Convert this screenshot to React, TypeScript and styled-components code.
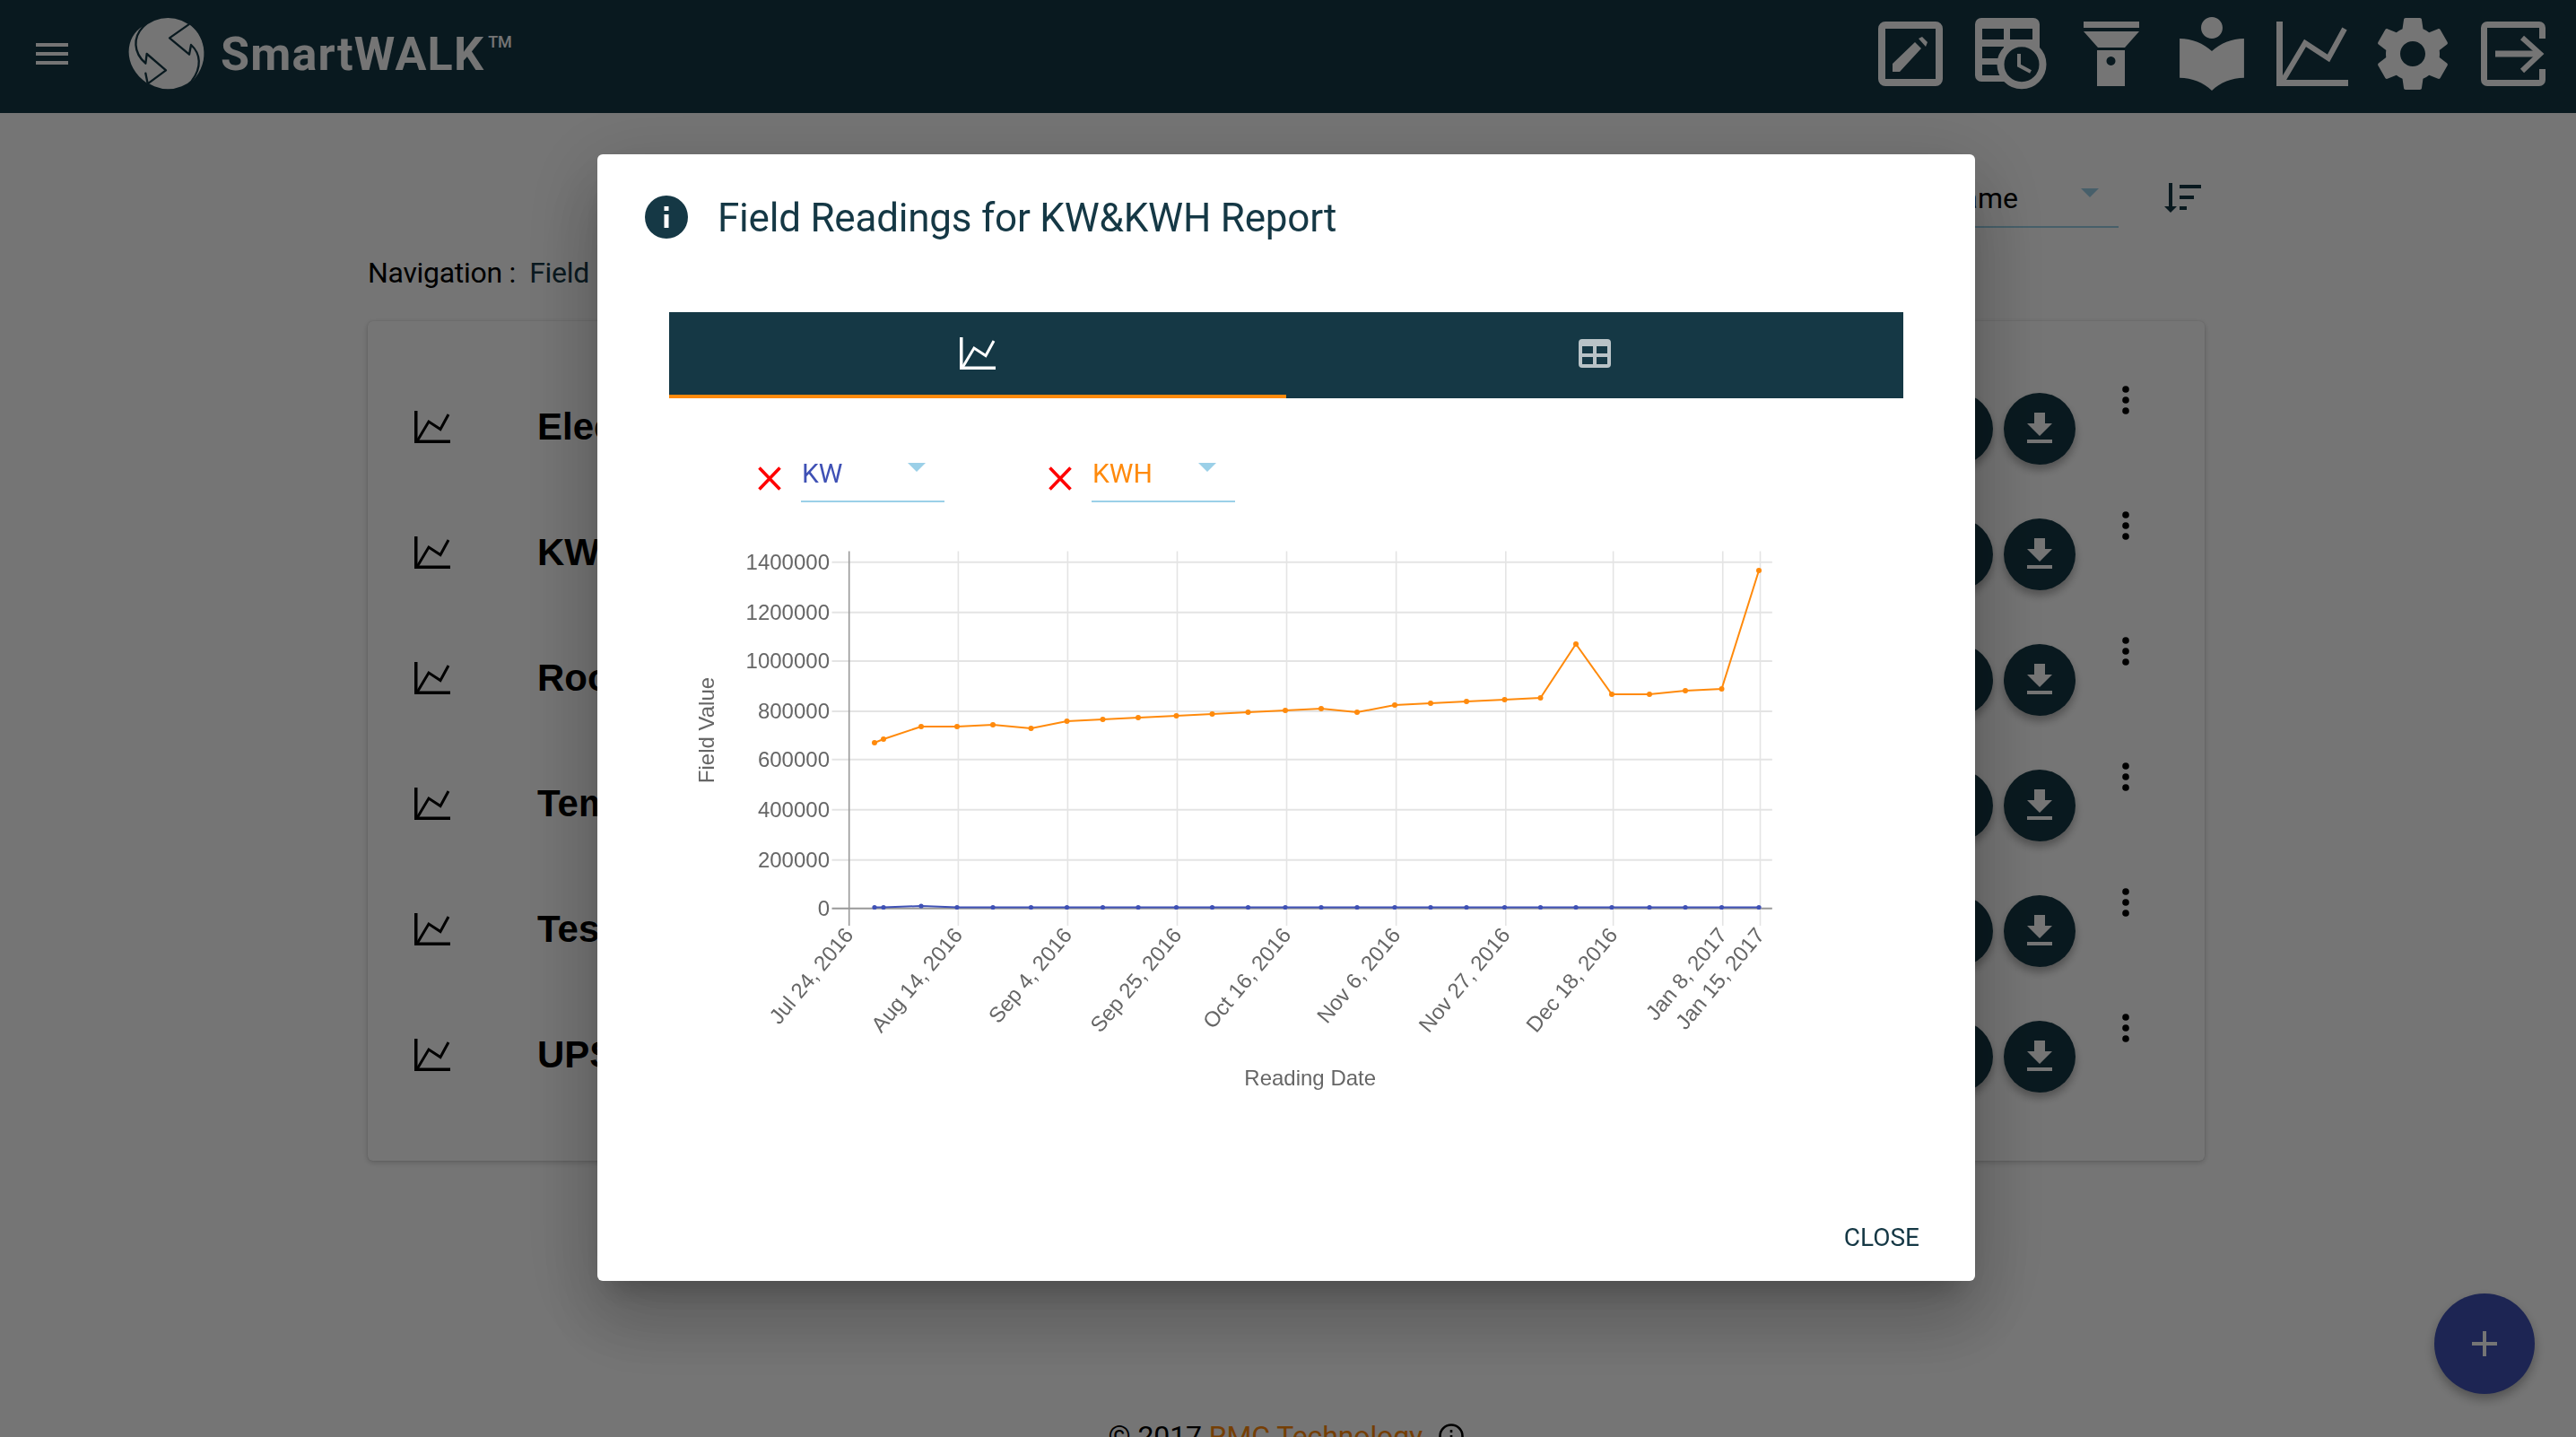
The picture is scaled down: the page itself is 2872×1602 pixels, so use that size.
import React from 'react';
import styled, { createGlobalStyle } from 'styled-components';

const TEAL = '#153845';
const ORANGE = '#ff8a0c';
const INDIGO = '#3f51b5';
const SKY = '#9bd0e8';

const GlobalStyle = createGlobalStyle`
  html, body {
    margin: 0;
    height: 100%;
    overflow: hidden;
    background: #fff;
    font-family: Roboto, "Liberation Sans", sans-serif;
  }
`;

const reports = ['Electric Meter', 'KW&KWH Report', 'Room Readings', 'Temperature', 'Test Report', 'UPS Readings'];

// sampled off the chart, in the chart's own pixel space
const xs = [975, 985, 1027, 1067, 1107, 1149.5, 1189.5, 1229.5, 1269, 1311.5, 1351.5, 1391.5, 1433, 1473, 1513, 1555, 1595, 1635, 1677.5, 1717.5, 1757, 1797, 1839, 1879, 1919.5, 1961];
const kwh = [828, 824, 810, 810, 808, 812, 804, 802, 800, 798, 796, 794, 792, 790, 794, 786, 784, 782, 780, 778, 718, 774, 774, 770, 768, 636];
const kw = xs.map((_, i) => (i === 2 ? 1010 : 1011.5));

const yTicks = [
  { label: '1400000', y: 626.7 },
  { label: '1200000', y: 682.7 },
  { label: '1000000', y: 737 },
  { label: '800000', y: 793 },
  { label: '600000', y: 846.8 },
  { label: '400000', y: 902.8 },
  { label: '200000', y: 958.8 },
  { label: '0', y: 1012.7 },
];

const xTicks = [
  { label: 'Jul 24, 2016', x: 946.7 },
  { label: 'Aug 14, 2016', x: 1068.4 },
  { label: 'Sep 4, 2016', x: 1190.4 },
  { label: 'Sep 25, 2016', x: 1312.5 },
  { label: 'Oct 16, 2016', x: 1434.5 },
  { label: 'Nov 6, 2016', x: 1556.6 },
  { label: 'Nov 27, 2016', x: 1678.8 },
  { label: 'Dec 18, 2016', x: 1798.6 },
  { label: 'Jan 8, 2017', x: 1920.7 },
  { label: 'Jan 15, 2017', x: 1962.5 },
];

const ChartLineIcon = () => (
  <svg viewBox="0 0 80 72" width="100%" height="100%" fill="none" stroke="currentColor">
    <path d="M3.5 0V68.5H80" strokeWidth="7" />
    <path d="M7 66L32 24L58 41L76 8" strokeWidth="6" />
  </svg>
);

const Logo = () => (
  <LogoMark viewBox="0 0 360 300">
    <circle cx="172" cy="149" r="119" fill="#fff" />
    <path d="M240 50C290 80 322 170 252 243C290 190 282 150 249 120Z" fill="#fff" />
    <path d="M88 58C30 90 15 190 104 250L97 182C62 150 60 100 88 58Z" fill="#fff" />
    <g fill="none" stroke={TEAL} strokeWidth="7" strokeLinejoin="round" strokeLinecap="round">
      <path d="M241 52L177 97L243 152L249 120C282 150 285 195 252 240" />
      <path d="M88 60C55 95 55 145 97 182L101 150L165 205L104 250L97 215" />
    </g>
  </LogoMark>
);

const App: React.FC = () => {
  return (
    <>
      <GlobalStyle />
      <Toolbar>
        <MenuButton>
          <i />
          <i />
          <i />
        </MenuButton>
        <LogoGroup>
          <Logo />
          <LogoText>
            SmartWALK<sup>TM</sup>
          </LogoText>
        </LogoGroup>
        <ToolbarIcons>
          <ToolbarIcon>
            <svg width="72" height="72" viewBox="0 0 72 72" fill="currentColor">
              <rect x="4" y="4" width="64" height="64" rx="4" fill="none" stroke="currentColor" strokeWidth="8" />
              <path d="M16 56V47L41 23L48 30L24 56ZM45 19L49 17L55 23L53 28Z" />
            </svg>
          </ToolbarIcon>
          <ToolbarIcon>
            <svg width="80" height="80" viewBox="0 0 80 80">
              <path
                fillRule="evenodd"
                fill="currentColor"
                d="M7 0H65a7 7 0 0 1 7 7V64a7 7 0 0 1-7 7H7a7 7 0 0 1-7-7V7a7 7 0 0 1 7-7ZM8 12V24H32V12ZM39 12V24H64V12ZM8 32V45H32V32ZM8 52V64H32V52Z"
              />
              <circle cx="52" cy="51.7" r="23.5" fill={TEAL} stroke="currentColor" strokeWidth="8" />
              <path d="M49 40V53L62 60" fill="none" stroke="currentColor" strokeWidth="4" />
            </svg>
          </ToolbarIcon>
          <ToolbarIcon>
            <svg width="62" height="72" viewBox="0 0 62 72" fill="currentColor">
              <path
                fillRule="evenodd"
                d="M0 0H62V7H0ZM0 11H62L46 29H16ZM15 32H46V72H15ZM30.5 39a5 5 0 1 0 .01 0Z"
              />
            </svg>
          </ToolbarIcon>
          <ToolbarIcon>
            <svg width="72" height="82" viewBox="3 2 18 20.55" fill="currentColor">
              <path d="M12 11.55C9.64 9.35 6.48 8 3 8v11c3.48 0 6.64 1.35 9 3.55 2.36-2.19 5.52-3.55 9-3.55V8c-3.48 0-6.64 1.35-9 3.55zM12 8c1.66 0 3-1.34 3-3s-1.34-3-3-3-3 1.34-3 3 1.34 3 3 3z" />
            </svg>
          </ToolbarIcon>
          <ToolbarIcon>
            <ChartBox $width={80} $height={72}>
              <ChartLineIcon />
            </ChartBox>
          </ToolbarIcon>
          <ToolbarIcon>
            <svg width="80" height="80" viewBox="2 2 20 20" fill="currentColor">
              <path d="M19.43 12.98c.04-.32.07-.64.07-.98s-.03-.66-.07-.98l2.11-1.65c.19-.15.24-.42.12-.64l-2-3.46c-.12-.22-.39-.3-.61-.22l-2.49 1c-.52-.4-1.08-.73-1.69-.98l-.38-2.65C14.46 2.18 14.25 2 14 2h-4c-.25 0-.46.18-.49.42l-.38 2.65c-.61.25-1.17.59-1.69.98l-2.49-1c-.23-.09-.49 0-.61.22l-2 3.46c-.13.22-.07.49.12.64l2.11 1.65c-.04.32-.07.65-.07.98s.03.66.07.98l-2.11 1.65c-.19.15-.24.42-.12.64l2 3.46c.12.22.39.3.61.22l2.49-1c.52.4 1.08.73 1.69.98l.38 2.65c.03.24.24.42.49.42h4c.25 0 .46-.18.49-.42l.38-2.65c.61-.25 1.17-.59 1.69-.98l2.49 1c.23.09.49 0 .61-.22l2-3.46c.12-.22.07-.49-.12-.64l-2.11-1.65zM12 15.5c-1.93 0-3.5-1.57-3.5-3.5s1.57-3.5 3.5-3.5 3.5 1.57 3.5 3.5-1.57 3.5-3.5 3.5z" />
            </svg>
          </ToolbarIcon>
          <ToolbarIcon>
            <svg width="72" height="72" viewBox="0 0 72 72" fill="none" stroke="currentColor" strokeWidth="7">
              <path d="M68.5 19V7a3.5 3.5 0 0 0-3.5-3.5H7A3.5 3.5 0 0 0 3.5 7V65A3.5 3.5 0 0 0 7 68.5H65a3.5 3.5 0 0 0 3.5-3.5V53" />
              <path d="M16 36H66" />
              <path d="M46 18L66 36L46 55" strokeWidth="6" />
            </svg>
          </ToolbarIcon>
        </ToolbarIcons>
      </Toolbar>

      <Main>
        <Controls>
          <SortSelect>
            Field Name
            <SortCaret />
          </SortSelect>
          <SortIcon viewBox="0 0 41 33" fill={TEAL}>
            <path d="M5 0H9V26H14L7 33L0 26H5ZM17 2H41V6H17ZM17 14H33V18H17ZM17 26H25V30H17Z" />
          </SortIcon>
        </Controls>
        <Breadcrumb>
          Navigation :&nbsp; <BreadcrumbLink>Field Readings</BreadcrumbLink>
        </Breadcrumb>
        <Card>
          {reports.map((name) => (
            <ReportRow key={name}>
              <ChartBox $width={40} $height={36} $color="#000">
                <ChartLineIcon />
              </ChartBox>
              <ReportName>{name}</ReportName>
              <RoundButton />
              <RoundButton>
                <svg width="48" height="48" viewBox="0 0 24 24" fill="#fff">
                  <path d="M19 9h-4V3H9v6H5l7 7 7-7zM5 18v2h14v-2H5z" />
                </svg>
              </RoundButton>
              <MoreDots width="8" height="32" viewBox="0 0 8 32" fill="#000">
                <circle cx="4" cy="4" r="3.8" />
                <circle cx="4" cy="16" r="3.8" />
                <circle cx="4" cy="28" r="3.8" />
              </MoreDots>
            </ReportRow>
          ))}
        </Card>
        <Footer>
          © 2017 <FooterLink>RMC Technology</FooterLink>.
          <FooterInfo width="28" height="28" viewBox="0 0 28 28" fill="none" stroke="#000" strokeWidth="2.6">
            <circle cx="14" cy="14" r="12.5" />
            <path d="M14 7V10M14 13V21" />
          </FooterInfo>
        </Footer>
      </Main>

      <Fab>
        <svg width="28" height="28" viewBox="0 0 28 28" fill="#fff">
          <path d="M12 0H16V12H28V16H16V28H12V16H0V12H12Z" />
        </svg>
      </Fab>

      <Overlay>
        <Dialog>
          <DialogTitle>
            <svg width="48" height="48" viewBox="0 0 48 48">
              <circle cx="24" cy="24" r="24" fill={TEAL} />
              <rect x="21.5" y="12" width="5" height="5" fill="#fff" />
              <rect x="21.5" y="21" width="5" height="15" fill="#fff" />
            </svg>
            <DialogHeading>Field Readings for KW&amp;KWH Report</DialogHeading>
          </DialogTitle>

          <Tabs>
            <Tab $active>
              <ChartBox $width={40} $height={36}>
                <ChartLineIcon />
              </ChartBox>
            </Tab>
            <Tab>
              <svg width="36" height="32" viewBox="0 0 36 32">
                <path
                  fillRule="evenodd"
                  fill="currentColor"
                  d="M4 0H32a4 4 0 0 1 4 4V28a4 4 0 0 1-4 4H4a4 4 0 0 1-4-4V4a4 4 0 0 1 4-4ZM4 8V16H16V8ZM20 8V16H32V8ZM4 20V28H16V20ZM20 20V28H32V20Z"
                />
              </svg>
            </Tab>
          </Tabs>

          <Filters>
            <Filter>
              <RemoveIcon width="26" height="27" viewBox="0 0 26 27" stroke="#f00" strokeWidth="3.6">
                <path d="M1.5 1.5L24.5 25.5M24.5 1.5L1.5 25.5" />
              </RemoveIcon>
              <FieldSelect $color={INDIGO}>
                KW
                <FieldCaret />
              </FieldSelect>
            </Filter>
            <Filter>
              <RemoveIcon width="26" height="27" viewBox="0 0 26 27" stroke="#f00" strokeWidth="3.6">
                <path d="M1.5 1.5L24.5 25.5M24.5 1.5L1.5 25.5" />
              </RemoveIcon>
              <FieldSelect $color={ORANGE}>
                KWH
                <FieldCaret />
              </FieldSelect>
            </Filter>
          </Filters>

          <Chart viewBox="746 590 1376 640" width="1376" height="640">
            {yTicks.map((t) => (
              <g key={t.label}>
                <line x1="927.5" x2="1975.8" y1={t.y} y2={t.y} stroke={t.label === '0' ? '#999' : '#e4e4e4'} strokeWidth="2" />
                <AxisText x="925" y={t.y + 8} textAnchor="end">
                  {t.label}
                </AxisText>
              </g>
            ))}
            {xTicks.map((t, i) => (
              <g key={t.label}>
                <line x1={t.x} x2={t.x} y1="614.5" y2="1032" stroke={i === 0 ? '#999' : '#e4e4e4'} strokeWidth="1.6" />
                <AxisText x={t.x + 6} y="1043" textAnchor="end" transform={`rotate(-50 ${t.x + 6} 1043)`}>
                  {t.label}
                </AxisText>
              </g>
            ))}
            <polyline points={xs.map((x, i) => `${x},${kw[i]}`).join(' ')} fill="none" stroke={INDIGO} strokeWidth="2" />
            {xs.map((x, i) => (
              <circle key={x} cx={x} cy={kw[i]} r="2.6" fill={INDIGO} />
            ))}
            <polyline points={xs.map((x, i) => `${x},${kwh[i]}`).join(' ')} fill="none" stroke={ORANGE} strokeWidth="2" />
            {xs.map((x, i) => (
              <circle key={x} cx={x} cy={kwh[i]} r="3" fill={ORANGE} />
            ))}
            <AxisText x="796" y="814" textAnchor="middle" transform="rotate(-90 796 814)">
              Field Value
            </AxisText>
            <AxisText x="1460.7" y="1210" textAnchor="middle">
              Reading Date
            </AxisText>
          </Chart>

          <DialogActions>
            <CloseButton>CLOSE</CloseButton>
          </DialogActions>
        </Dialog>
      </Overlay>
    </>
  );
};

const Toolbar = styled.header`
  height: 126px;
  display: flex;
  align-items: center;
  background: ${TEAL};
  color: #fff;
`;

const MenuButton = styled.div`
  width: 36px;
  height: 24px;
  margin-left: 40px;
  display: flex;
  flex-direction: column;
  justify-content: space-between;
  margin-bottom: 6px;

  i {
    display: block;
    height: 4px;
    background: #fff;
  }
`;

const LogoGroup = styled.div`
  display: flex;
  align-items: center;
  margin: 0 0 6px 54px;
`;

const LogoMark = styled.svg`
  width: 120px;
  height: 100px;
`;

const LogoText = styled.div`
  margin-left: -4px;
  font-size: 52px;
  font-weight: 700;
  letter-spacing: 1.2px;
  color: #fff;

  sup {
    font-size: 18px;
    font-weight: 500;
    letter-spacing: 0;
    line-height: 0;
    vertical-align: 25px;
    margin-left: 4px;
  }
`;

const ToolbarIcons = styled.div`
  display: flex;
  margin: 0 0 6px auto;
  padding-right: 14px;
`;

const ToolbarIcon = styled.div`
  width: 112px;
  height: 82px;
  display: flex;
  align-items: center;
  justify-content: center;
  color: #fff;
`;

const ChartBox = styled.div<{ $width: number; $height: number; $color?: string }>`
  width: ${({ $width }) => $width}px;
  height: ${({ $height }) => $height}px;
  flex: none;
  color: ${({ $color }) => $color || '#fff'};

  svg {
    display: block;
  }
`;

const Main = styled.main`
  padding: 64px 414px 0 410px;
  color: #000;
`;

const Controls = styled.div`
  height: 64px;
  display: flex;
  justify-content: flex-end;
  padding-right: 4px;
`;

const SortSelect = styled.div`
  position: relative;
  width: 300px;
  height: 64px;
  box-sizing: border-box;
  padding: 9px 112px 9px 0;
  border-bottom: 2px solid ${SKY};
  font-size: 32px;
  font-weight: 400;
  line-height: 44px;
  text-align: right;
  white-space: nowrap;
`;

const SortCaret = styled.span`
  position: absolute;
  right: 22px;
  top: 20px;
  border: 10px solid transparent;
  border-top-color: ${SKY};
  border-bottom: 0;
`;

const SortIcon = styled.svg`
  width: 41px;
  height: 33px;
  margin: 14px 0 0 51px;
`;

const Breadcrumb = styled.div`
  margin-top: 28px;
  font-size: 32px;
  font-weight: 400;
  letter-spacing: -0.3px;
  line-height: 44px;
  white-space: nowrap;
`;

const BreadcrumbLink = styled.span`
  color: ${TEAL};
`;

const Card = styled.section`
  margin-top: 32px;
  padding: 50px 84px 46px 52px;
  border-radius: 6px;
  background: #fff;
  box-shadow: 0 2px 6px rgba(0, 0, 0, 0.2), 0 0 2px rgba(0, 0, 0, 0.12);
`;

const ReportRow = styled.div`
  height: 140px;
  display: flex;
  align-items: center;

  > div:first-child {
    margin-bottom: 4px;
  }
`;

const ReportName = styled.div`
  margin: 0 auto 4px 97px;
  font-family: 'Liberation Sans', Arial, sans-serif;
  font-size: 42px;
  font-weight: 700;
  white-space: nowrap;
`;

const RoundButton = styled.div`
  width: 80px;
  height: 80px;
  margin-left: 12px;
  flex: none;
  display: flex;
  align-items: center;
  justify-content: center;
  border-radius: 50%;
  background: ${TEAL};
  box-shadow: 0 6px 10px rgba(0, 0, 0, 0.3);
`;

const MoreDots = styled.svg`
  align-self: flex-start;
  flex: none;
  margin: 22px 0 0 52px;
`;

const Footer = styled.footer`
  margin-top: 285px;
  display: flex;
  justify-content: center;
  align-items: center;
  font-size: 32px;
  font-weight: 400;
  letter-spacing: -0.1px;
  line-height: 44px;
  white-space: pre;
`;

const FooterLink = styled.span`
  color: ${ORANGE};
`;

const FooterInfo = styled.svg`
  margin-left: 10px;
`;

const Fab = styled.div`
  position: fixed;
  right: 46px;
  bottom: 48px;
  width: 112px;
  height: 112px;
  display: flex;
  align-items: center;
  justify-content: center;
  border-radius: 50%;
  background: ${INDIGO};
  box-shadow: 0 6px 12px rgba(0, 0, 0, 0.3);
`;

const Overlay = styled.div`
  position: fixed;
  inset: 0;
  box-sizing: border-box;
  padding: 0 4px 2px 0;
  display: flex;
  align-items: center;
  justify-content: center;
  background: rgba(0, 0, 0, 0.54);
`;

const Dialog = styled.div`
  width: 1536px;
  height: 1256px;
  display: flex;
  flex-direction: column;
  border-radius: 6px;
  background: #fff;
  box-shadow: 0 22px 30px -14px rgba(0, 0, 0, 0.2), 0 48px 76px 6px rgba(0, 0, 0, 0.14), 0 18px 92px 16px rgba(0, 0, 0, 0.12);
`;

const DialogTitle = styled.div`
  height: 140px;
  display: flex;
  align-items: center;
  padding-left: 53px;
  margin-bottom: 36px;
  flex: none;
`;

const DialogHeading = styled.h2`
  margin: 2px 0 0 33px;
  font-size: 44px;
  font-weight: 400;
  letter-spacing: -0.22px;
  color: ${TEAL};
  white-space: nowrap;
`;

const Tabs = styled.div`
  width: 1376px;
  margin-left: 80px;
  display: flex;
  flex: none;
  background: ${TEAL};
`;

const Tab = styled.div<{ $active?: boolean }>`
  width: 50%;
  height: 96px;
  box-sizing: border-box;
  display: flex;
  align-items: center;
  justify-content: center;
  border-bottom: 4px solid ${({ $active }) => ($active ? ORANGE : 'transparent')};
  color: ${({ $active }) => ($active ? '#fff' : 'rgba(255, 255, 255, 0.7)')};
`;

const Filters = styled.div`
  margin: 60px 0 0 179px;
  display: flex;
  gap: 116px;
  flex: none;
`;

const Filter = styled.div`
  display: flex;
  gap: 22px;
`;

const RemoveIcon = styled.svg`
  margin-top: 16px;
`;

const FieldSelect = styled.div<{ $color: string }>`
  position: relative;
  width: 160px;
  height: 56px;
  box-sizing: border-box;
  padding: 2px 0 0 1px;
  border-bottom: 2px solid ${SKY};
  font-size: 30px;
  font-weight: 400;
  line-height: 44px;
  color: ${({ $color }) => $color};
`;

const FieldCaret = styled.span`
  position: absolute;
  left: 119px;
  top: 12px;
  border: 10px solid transparent;
  border-top-color: ${SKY};
  border-bottom: 0;
`;

const Chart = styled.svg`
  display: block;
  margin: 30px 0 0 80px;
  flex: none;
`;

const AxisText = styled.text`
  font-family: 'Liberation Sans', Arial, sans-serif;
  font-size: 24px;
  fill: #666;
`;

const DialogActions = styled.div`
  margin-top: auto;
  padding: 0 62px 27px 0;
  display: flex;
  justify-content: flex-end;
`;

const CloseButton = styled.div`
  font-size: 28px;
  font-weight: 400;
  line-height: 42px;
  color: ${TEAL};
`;

export default App;
